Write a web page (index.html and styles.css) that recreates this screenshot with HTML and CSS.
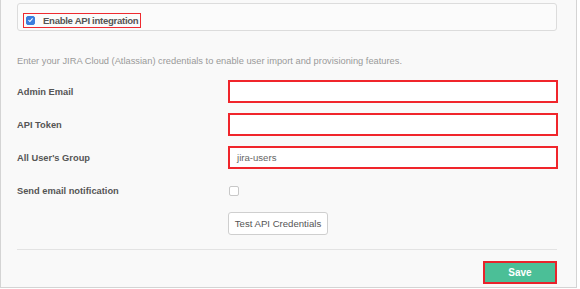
FILE: index.html
```html
<!DOCTYPE html>
<html>
<head>
<meta charset="utf-8">
<link rel="stylesheet" href="styles.css">
</head>
<body>
<div class="panel">
  <div class="enable-box">
    <label class="enable-label">
      <span class="checkbox checked"><svg width="8" height="8" viewBox="0 0 8 8"><path d="M1.7 4.2 L3.3 5.8 L6.4 2.2" fill="none" stroke="#fff" stroke-width="1.2"/></svg></span>
      <span>Enable API integration</span>
    </label>
  </div>
  <p class="desc">Enter your JIRA Cloud (Atlassian) credentials to enable user import and provisioning features.</p>
  <div class="form">
    <div class="label">Admin Email</div>
    <div class="input hl"></div>
    <div class="label">API Token</div>
    <div class="input hl"></div>
    <div class="label">All User's Group</div>
    <div class="input hl">jira-users</div>
    <div class="label">Send email notification</div>
    <div class="check-cell"><span class="checkbox"></span></div>
    <div></div>
    <div><span class="btn">Test API Credentials</span></div>
  </div>
  <div class="divider"></div>
  <div class="footer"><span class="save">Save</span></div>
</div>
</body>
</html>
```
FILE: styles.css
```css
html, body {
  margin: 0;
  padding: 0;
  background: #fff;
}
body {
  font-family: "Liberation Sans", Arial, sans-serif;
  color: #555;
}
.panel {
  box-sizing: border-box;
  width: 577px;
  height: 288px;
  border: 1px solid #d4d4d4;
  border-top: none;
  background: #f9f9f9;
  padding: 3px 19px 0 16px;
}
.enable-box {
  box-sizing: border-box;
  height: 28px;
  border: 1px solid #dcdcdc;
  border-radius: 3px;
  background: #fbfbfb;
  padding: 6px 0 0 5px;
}
.enable-label {
  display: inline-flex;
  align-items: center;
  gap: 8px;
  box-sizing: border-box;
  height: 15px;
  padding: 0 2px 0 2px;
  border: 1px solid #ee2a30;
  font-size: 9.6px;
  letter-spacing: -0.3px;
  font-weight: bold;
  color: #555;
}
.checkbox {
  display: inline-flex;
  align-items: center;
  justify-content: center;
  box-sizing: border-box;
  width: 9px;
  height: 9px;
  border: 1px solid #c8c8c8;
  border-radius: 2px;
  background: #fff;
}
.checkbox.checked {
  background: #3b7ddd;
  border-color: #3b7ddd;
}
.desc {
  margin: 24px 0 0 0;
  font-size: 9.3px;
  line-height: 12px;
  color: #9a9a9a;
}
.form {
  display: grid;
  grid-template-columns: 211px 330px;
  grid-auto-rows: 23px;
  row-gap: 10px;
  margin-top: 13px;
  align-items: center;
}
.label {
  font-size: 9.3px;
  font-weight: bold;
  color: #555;
}
.input {
  box-sizing: border-box;
  height: 23px;
  background: #fff;
  border: 2px solid #f0252b;
  font-size: 9.6px;
  color: #666;
  padding: 0 0 0 7px;
  display: flex;
  align-items: center;
}
.check-cell {
  padding-left: 1px;
  display: flex;
  align-items: center;
}
.check-cell .checkbox {
  width: 10px;
  height: 10px;
}
.btn {
  display: inline-flex;
  align-items: center;
  justify-content: center;
  box-sizing: border-box;
  width: 100px;
  height: 23px;
  border: 1px solid #cfcfcf;
  border-radius: 3px;
  background: #fff;
  font-size: 9.6px;
  color: #555;
}
.divider {
  margin-top: 14px;
  height: 1px;
  background: #e3e3e3;
}
.footer {
  display: flex;
  justify-content: flex-end;
  padding-top: 11px;
}
.save {
  display: inline-flex;
  align-items: center;
  justify-content: center;
  box-sizing: border-box;
  width: 74px;
  height: 23px;
  background: #4bbf97;
  border: 2px solid #e8232b;
  color: #fff;
  font-size: 10px;
  font-weight: bold;
}
```
